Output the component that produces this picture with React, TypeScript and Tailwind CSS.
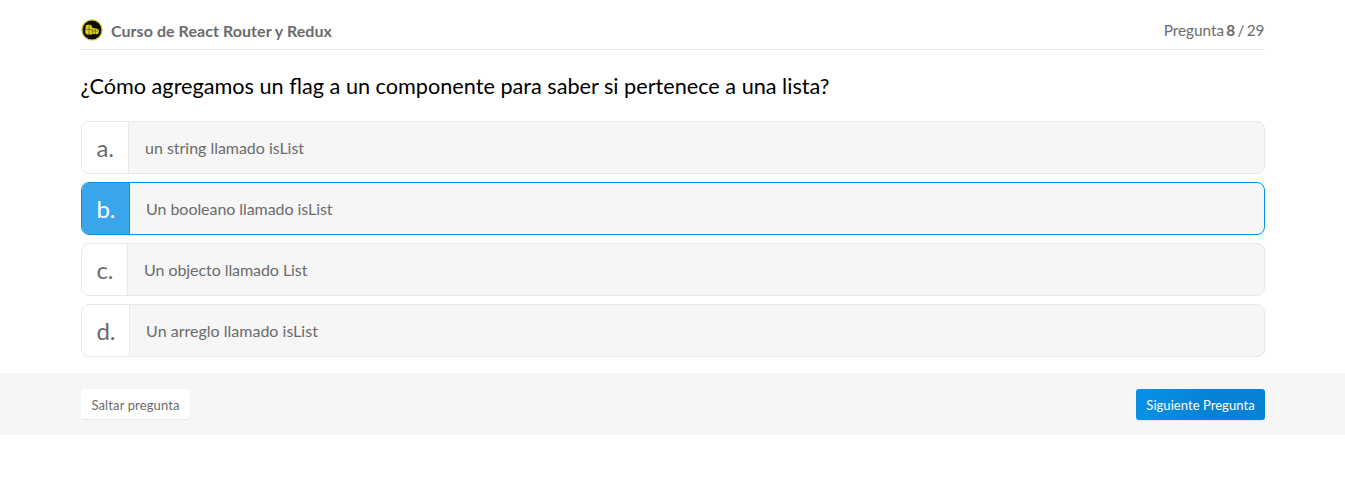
import React from 'react';

const options = [
  { letter: 'a.', text: 'un string llamado isList', selected: false, cell: 'w-[47px]', tracking: 'tracking-[-0.03px]' },
  { letter: 'b.', text: 'Un booleano llamado isList', selected: true, cell: 'w-[48px]', tracking: 'tracking-[-0.06px]' },
  { letter: 'c.', text: 'Un objecto llamado List', selected: false, cell: 'w-[46px]', tracking: 'tracking-[-0.07px]' },
  { letter: 'd.', text: 'Un arreglo llamado isList', selected: false, cell: 'w-[48px]', tracking: 'tracking-[0.01px]' },
];

function CourseBadge() {
  return (
    <svg viewBox="0 0 22 22" className="h-[22px] w-[22px]">
      <circle cx="11" cy="11" r="10" fill="#0c0c06" stroke="#cfbd1c" strokeWidth="1.2" />
      <path
        d="M4.6 7.4 Q4.8 5.8 6.4 5.8 H9.2 Q10.6 6 10.8 7.4 L11.4 8.7 L14.8 9.6 Q17.8 9.7 17.9 12.2 Q17.8 15.3 15 15.3 L12.8 14.8 Q11.8 15.6 10 15.4 H6.3 Q4.2 15.2 4.2 13 Z"
        fill="#e0cf18"
      />
      <path d="M4.6 10.4 H11.4 V14.6 M8 6.2 V15 M11.2 12 H17 M14.4 10 V15" fill="none" stroke="#3a3608" strokeWidth="0.5" />
    </svg>
  );
}

export default function App() {
  return (
    <div className="min-h-[493px] bg-white font-['Lato',sans-serif] text-[#6b6b6b]">
      <main className="mx-auto w-[1184px]">
        <header className="flex h-[50px] items-center justify-between border-b border-[#e8e8e8] pt-3">
          <div className="flex items-center gap-[8.5px]">
            <div className="-mt-0.5"><CourseBadge /></div>
            <h1 className="text-base font-bold tracking-[0.06px]">Curso de React Router y Redux</h1>
          </div>
          <p className="-mt-0.5 text-[15.3px] leading-6 [word-spacing:-1.6px]">Pregunta <b>8</b> / 29</p>
        </header>
        <h2 className="mt-5 text-[21.66px] leading-8 text-black">¿Cómo agregamos un flag a un componente para saber si pertenece a una lista?</h2>
        <ul className="mt-[19px] flex flex-col gap-2">
          {options.map((o) => (
            <li key={o.letter} className={`flex h-[53px] overflow-hidden rounded-lg border bg-[#f6f6f6] ${o.selected ? 'border-[#0791e6]' : 'border-[#e8e8e8]'}`}>
              <span className={`flex shrink-0 items-center border-r pl-[15px] text-2xl tracking-[-0.3px] ${o.cell} ${o.selected ? 'border-[#0791e6] bg-[#39a6eb] text-white' : 'border-[#e8e8e8] bg-white'}`}>{o.letter}</span>
              <span className={`flex items-center pl-[16.6px] text-base ${o.tracking}`}>{o.text}</span>
            </li>
          ))}
        </ul>
      </main>
      <footer className="mt-4 h-[62px] bg-[#f6f6f6]">
        <div className="mx-auto flex w-[1184px] items-start justify-between pt-4">
          <button className="h-[30px] w-[109px] rounded-[3px] bg-white pt-[3px] pl-px text-[13px] tracking-[0.12px] shadow-[0_1px_1px_rgba(0,0,0,0.06)]">Saltar pregunta</button>
          <button className="h-[31px] w-[129px] rounded-[3px] bg-linear-to-r from-[#0791e6] to-[#0682d4] to-60% pt-0.5 pl-px text-[13px] tracking-[0.05px] text-white shadow-[0_1px_1px_rgba(0,0,0,0.06)]">Siguiente Pregunta</button>
        </div>
      </footer>
    </div>
  );
}
